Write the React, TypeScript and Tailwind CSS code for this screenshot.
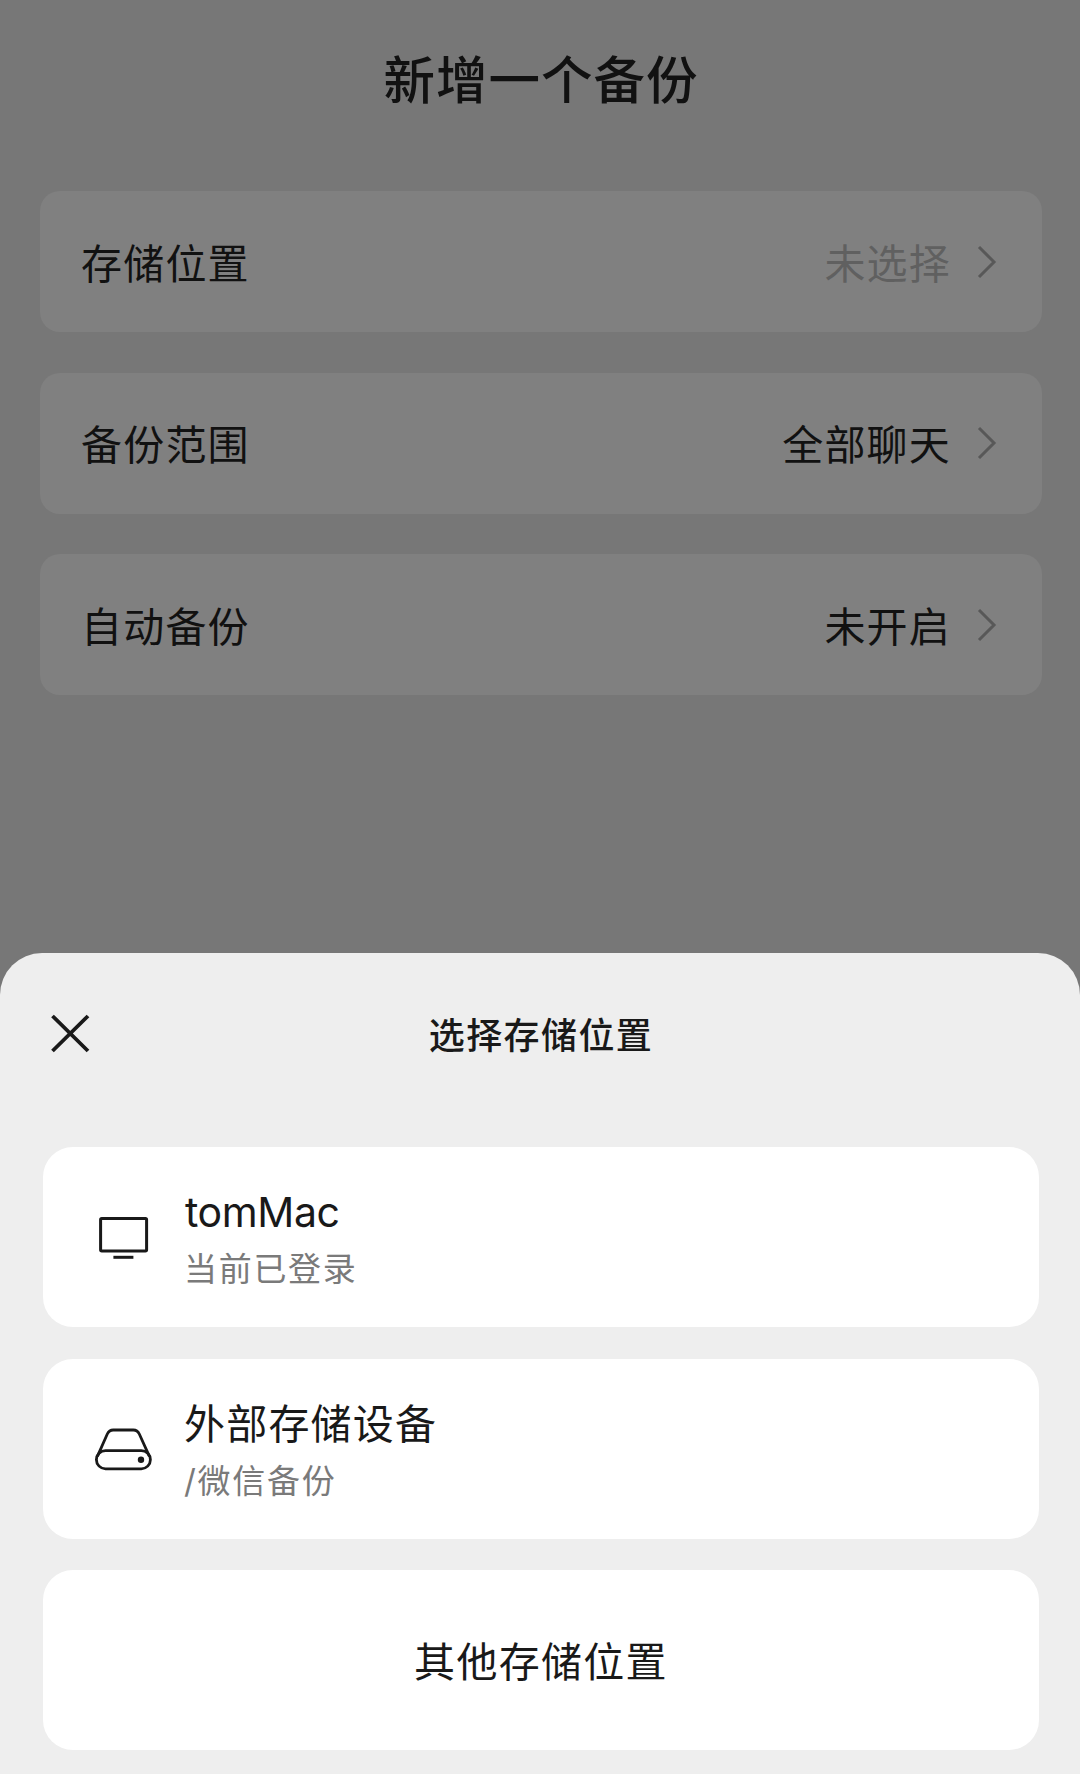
import React from 'react';

interface SettingRowProps {
  label: string;
  value: string;
  muted?: boolean;
}

interface DeviceCardProps {
  icon: React.ReactNode;
  name: string;
  detail: string;
  latin?: boolean;
}

const settings: SettingRowProps[] = [
  { label: '存储位置', value: '未选择', muted: true },
  { label: '备份范围', value: '全部聊天' },
  { label: '自动备份', value: '未开启' },
];

const ChevronIcon = () => (
  <svg className="ml-[26px] h-9 w-5" viewBox="0 0 20 36" fill="none" stroke="#585858" strokeWidth="3">
    <path d="M2 3 L17 18 L2 33" />
  </svg>
);

const CloseIcon = () => (
  <svg className="h-10 w-10" viewBox="0 0 40 40" fill="none" stroke="#191919" strokeWidth="3.8">
    <path d="M2.5 3 L38 38 M38 3 L2.5 38" />
  </svg>
);

const MonitorIcon = () => (
  <svg className="h-[60px] w-[60px]" viewBox="0 0 60 60" fill="none" stroke="#191919" strokeWidth="3">
    <rect x="7.6" y="11.4" width="46" height="32.6" rx="1.2" />
    <path d="M20.4 50.3 H40.4" />
  </svg>
);

const DriveIcon = () => (
  <svg className="h-[60px] w-[60px]" viewBox="0 0 60 60" fill="none" stroke="#191919" strokeWidth="2.8">
    <rect x="3.4" y="31.6" width="54" height="18.2" rx="9.1" />
    <path d="M4.4 37.4 L14.3 15 Q16.2 11 20.2 11 H40.4 Q44.4 11 46.3 15 L56.4 37.4" />
    <circle cx="48" cy="40.7" r="3.2" fill="#191919" stroke="none" />
  </svg>
);

const SettingRow: React.FC<SettingRowProps> = ({ label, value, muted }) => (
  <div className="flex h-[141px] items-center rounded-[20px] bg-[#808080] pr-[45px] pl-[41px] text-[41px] tracking-[1.2px]">
    <span className="flex-1 pt-1.5">{label}</span>
    <span className={muted ? 'pt-1.5 text-[#606060]' : 'pt-1.5'}>{value}</span>
    <ChevronIcon />
  </div>
);

const DeviceCard: React.FC<DeviceCardProps> = ({ icon, name, detail, latin }) => (
  <button className="flex h-[180px] w-full items-center rounded-[30px] bg-white pl-[50px] text-left">
    {icon}
    <span className="ml-[31px] flex flex-col pt-[7px]">
      <span
        className={
          latin
            ? 'pl-px text-[41px] leading-[57px] tracking-[-0.4px]'
            : 'text-[41px] leading-[57px] tracking-[1.2px]'
        }
      >
        {name}
      </span>
      <span className="text-[33px] leading-[56px] tracking-[1.7px] text-[#7a7a7a]">{detail}</span>
    </span>
  </button>
);

const App: React.FC = () => {
  return (
    <div className="flex h-[1774px] w-[1080px] flex-col overflow-hidden bg-[#777777] font-[Inter,'Noto_Sans_CJK_SC',sans-serif] text-[#111111]">
      <main className="flex h-[953px] shrink-0 flex-col pr-[38px] pl-10">
        <h1 className="flex h-[191px] items-center justify-center pb-[29px] text-[51.5px] font-medium tracking-[1px]">
          新增一个备份
        </h1>
        <div className="flex flex-col gap-[40.5px]">
          {settings.map((item) => (
            <SettingRow key={item.label} {...item} />
          ))}
        </div>
      </main>

      <section className="h-[821px] shrink-0 rounded-t-[42px] bg-[#eeeeee] pr-[41px] pl-[43px] text-[#191919]">
        <header className="flex h-[194px] items-center pb-[34px]">
          <button className="ml-[7px] w-10" aria-label="关闭">
            <CloseIcon />
          </button>
          <h2 className="flex-1 pt-1.5 pr-[47px] text-center text-[36px] font-medium tracking-[1.4px]">选择存储位置</h2>
        </header>
        <div className="flex flex-col gap-[31.5px]">
          <DeviceCard icon={<MonitorIcon />} name="tomMac" detail="当前已登录" latin />
          <DeviceCard icon={<DriveIcon />} name="外部存储设备" detail="/微信备份" />
          <button className="h-[180px] w-full rounded-[30px] bg-white pt-[5px] text-[41px] tracking-[1.3px]">
            其他存储位置
          </button>
        </div>
      </section>
    </div>
  );
};

export default App;
